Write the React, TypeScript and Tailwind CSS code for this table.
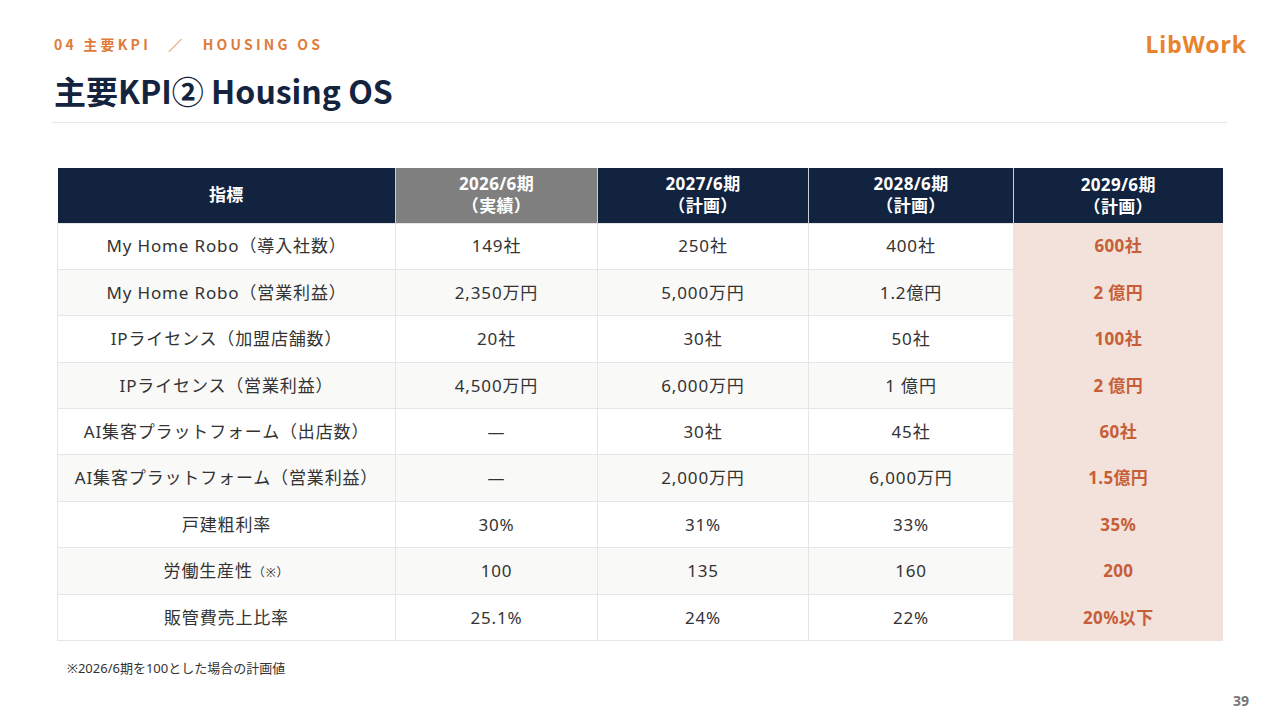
const rows: { label: string; note?: string; values: string[]; target: string }[] = [
  { label: "My Home Robo（導入社数）", values: ["149社", "250社", "400社"], target: "600社" },
  { label: "My Home Robo（営業利益）", values: ["2,350万円", "5,000万円", "1.2億円"], target: "2 億円" },
  { label: "IPライセンス（加盟店舗数）", values: ["20社", "30社", "50社"], target: "100社" },
  { label: "IPライセンス（営業利益）", values: ["4,500万円", "6,000万円", "1 億円"], target: "2 億円" },
  { label: "AI集客プラットフォーム（出店数）", values: ["—", "30社", "45社"], target: "60社" },
  { label: "AI集客プラットフォーム（営業利益）", values: ["—", "2,000万円", "6,000万円"], target: "1.5億円" },
  { label: "戸建粗利率", values: ["30%", "31%", "33%"], target: "35%" },
  { label: "労働生産性", note: "（※）", values: ["100", "135", "160"], target: "200" },
  { label: "販管費売上比率", values: ["25.1%", "24%", "22%"], target: "20%以下" },
];

const font = "font-['Noto_Sans','Noto_Sans_CJK_JP',sans-serif]";

export default function App() {
  return (
    <div className={`relative w-[1280px] h-[720px] bg-white overflow-hidden ${font}`}>
      {/* ヘッダー */}
      <div className="flex justify-between items-start pl-[54px] pr-[33px] pt-[35px]">
        <div className="h-[18px] leading-[18px] text-[14px] font-bold tracking-[0.23em] text-[#e07b39] font-['Noto_Sans_CJK_JP',sans-serif] whitespace-pre">
          04 主要KPI　／　HOUSING OS
        </div>
        <div className="h-[18px] leading-[18px] text-[23px] font-bold tracking-[0.04em] text-[#e8832c]">
          LibWork
        </div>
      </div>
      <h1 className="mt-[18px] pl-[54px] text-[32px] leading-[38px] font-bold text-[#14243f] font-['Noto_Sans_CJK_JP',sans-serif]">
        主要KPI② Housing OS
      </h1>
      <div className="mt-[13px] ml-[52px] w-[1175px] h-px bg-[#e6e6e6]" />

      {/* KPI表 */}
      <table className="mt-[45px] ml-[57px] w-[1165px] border-collapse table-fixed text-center">
        <colgroup>
          <col className="w-[338px]" />
          <col className="w-[202px]" />
          <col className="w-[211px]" />
          <col className="w-[205px]" />
          <col className="w-[209px]" />
        </colgroup>
        <thead>
          <tr className="h-[55px] text-white text-[17px] font-bold leading-[22px] tracking-[0.02em]">
            <th className="bg-[#12233f] border-r border-[#c9ced6]">指標</th>
            <th className="bg-[#7f7f7f] border-r border-[#c9ced6]">
              2026/6期
              <br />
              （実績）
            </th>
            <th className="bg-[#12233f] border-r border-[#c9ced6]">
              2027/6期
              <br />
              （計画）
            </th>
            <th className="bg-[#12233f] border-r border-[#c9ced6]">
              2028/6期
              <br />
              （計画）
            </th>
            <th className="bg-[#12233f]">
              2029/6期
              <br />
              （計画）
            </th>
          </tr>
        </thead>
        <tbody className="text-[17px] text-[#333333] tracking-[0.05em]">
          {rows.map((row, i) => (
            <tr key={row.label} className={`h-[46.4px] ${i % 2 === 1 ? "bg-[#f9f9f8]" : "bg-white"}`}>
              <td className="border border-[#e6e6e6]">
                {row.label}
                {row.note && <span className="text-[12px]">{row.note}</span>}
              </td>
              {row.values.map((v, j) => (
                <td key={j} className="border border-[#e6e6e6]">
                  {v}
                </td>
              ))}
              <td className="bg-[#f3e2db] font-bold tracking-[0.02em] text-[#c65f38]">{row.target}</td>
            </tr>
          ))}
        </tbody>
      </table>

      <p className="mt-[19px] ml-[67px] text-[13px] leading-[16px] text-[#333333]">
        ※2026/6期を100とした場合の計画値
      </p>

      <div className="absolute right-[31px] bottom-[9px] text-[14px] font-bold text-[#777777]">39</div>
    </div>
  );
}
